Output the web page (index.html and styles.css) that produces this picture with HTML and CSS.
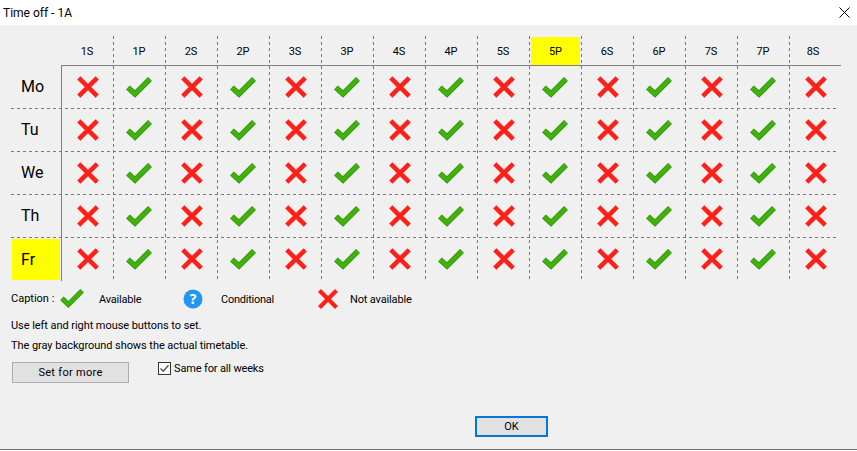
FILE: index.html
```html
<!DOCTYPE html>
<html lang="en">
<head>
<meta charset="utf-8">
<title>Time off - 1A</title>
<link rel="stylesheet" href="styles.css">
</head>
<body>
<svg class="defs" width="0" height="0" aria-hidden="true">
  <symbol id="no" viewBox="0 0 24 24"><path d="M3.5 3.5 L20.5 20.5 M20.5 3.5 L3.5 20.5" class="no-s"/></symbol>
  <symbol id="yes" viewBox="0 0 28 24"><path d="M3 12.5 L10 19 L25 4" class="yes-o"/><path d="M3 12.5 L10 19 L25 4" class="yes-s"/></symbol>
</svg>
<div class="page">
  <header class="titlebar">
    <span class="title">Time off - 1A</span>
    <svg class="close" viewBox="0 0 11 11" width="11" height="11"><path d="M.5 .5 L10.5 10.5 M10.5 .5 L.5 10.5"/></svg>
  </header>
  <main class="content">
    <div class="table">
      <svg class="lines" width="830" height="246" viewBox="0 0 830 246" aria-hidden="true">
        <path class="dash" d="M102.5 0V243M154.5 0V243M206.5 0V243M258.5 0V243M310.5 0V243M362.5 0V243M414.5 0V243M466.5 0V243M518.5 0V243M570.5 0V243M622.5 0V243M674.5 0V243M726.5 0V243M778.5 0V243"/>
        <path class="dash" d="M0 72.5H827M0 115.5H827M0 158.5H827M0 201.5H827"/>
        <path class="solid" d="M50.5 29V245M50 29.5H830"/>
      </svg>
      <div class="corner"></div>
      <div class="colhead">1S</div><div class="colhead">1P</div><div class="colhead">2S</div><div class="colhead">2P</div><div class="colhead">3S</div><div class="colhead">3P</div><div class="colhead">4S</div><div class="colhead">4P</div><div class="colhead">5S</div><div class="colhead mark">5P</div><div class="colhead">6S</div><div class="colhead">6P</div><div class="colhead">7S</div><div class="colhead">7P</div><div class="colhead last">8S</div>

      <div class="rowhead">Mo</div>
      <div class="cell"><svg class="no"><use href="#no"/></svg></div><div class="cell"><svg class="yes"><use href="#yes"/></svg></div><div class="cell"><svg class="no"><use href="#no"/></svg></div><div class="cell"><svg class="yes"><use href="#yes"/></svg></div><div class="cell"><svg class="no"><use href="#no"/></svg></div><div class="cell"><svg class="yes"><use href="#yes"/></svg></div><div class="cell"><svg class="no"><use href="#no"/></svg></div><div class="cell"><svg class="yes"><use href="#yes"/></svg></div><div class="cell"><svg class="no"><use href="#no"/></svg></div><div class="cell"><svg class="yes"><use href="#yes"/></svg></div><div class="cell"><svg class="no"><use href="#no"/></svg></div><div class="cell"><svg class="yes"><use href="#yes"/></svg></div><div class="cell"><svg class="no"><use href="#no"/></svg></div><div class="cell"><svg class="yes"><use href="#yes"/></svg></div><div class="cell"><svg class="no"><use href="#no"/></svg></div>

      <div class="rowhead">Tu</div>
      <div class="cell"><svg class="no"><use href="#no"/></svg></div><div class="cell"><svg class="yes"><use href="#yes"/></svg></div><div class="cell"><svg class="no"><use href="#no"/></svg></div><div class="cell"><svg class="yes"><use href="#yes"/></svg></div><div class="cell"><svg class="no"><use href="#no"/></svg></div><div class="cell"><svg class="yes"><use href="#yes"/></svg></div><div class="cell"><svg class="no"><use href="#no"/></svg></div><div class="cell"><svg class="yes"><use href="#yes"/></svg></div><div class="cell"><svg class="no"><use href="#no"/></svg></div><div class="cell"><svg class="yes"><use href="#yes"/></svg></div><div class="cell"><svg class="no"><use href="#no"/></svg></div><div class="cell"><svg class="yes"><use href="#yes"/></svg></div><div class="cell"><svg class="no"><use href="#no"/></svg></div><div class="cell"><svg class="yes"><use href="#yes"/></svg></div><div class="cell"><svg class="no"><use href="#no"/></svg></div>

      <div class="rowhead">We</div>
      <div class="cell"><svg class="no"><use href="#no"/></svg></div><div class="cell"><svg class="yes"><use href="#yes"/></svg></div><div class="cell"><svg class="no"><use href="#no"/></svg></div><div class="cell"><svg class="yes"><use href="#yes"/></svg></div><div class="cell"><svg class="no"><use href="#no"/></svg></div><div class="cell"><svg class="yes"><use href="#yes"/></svg></div><div class="cell"><svg class="no"><use href="#no"/></svg></div><div class="cell"><svg class="yes"><use href="#yes"/></svg></div><div class="cell"><svg class="no"><use href="#no"/></svg></div><div class="cell"><svg class="yes"><use href="#yes"/></svg></div><div class="cell"><svg class="no"><use href="#no"/></svg></div><div class="cell"><svg class="yes"><use href="#yes"/></svg></div><div class="cell"><svg class="no"><use href="#no"/></svg></div><div class="cell"><svg class="yes"><use href="#yes"/></svg></div><div class="cell"><svg class="no"><use href="#no"/></svg></div>

      <div class="rowhead">Th</div>
      <div class="cell"><svg class="no"><use href="#no"/></svg></div><div class="cell"><svg class="yes"><use href="#yes"/></svg></div><div class="cell"><svg class="no"><use href="#no"/></svg></div><div class="cell"><svg class="yes"><use href="#yes"/></svg></div><div class="cell"><svg class="no"><use href="#no"/></svg></div><div class="cell"><svg class="yes"><use href="#yes"/></svg></div><div class="cell"><svg class="no"><use href="#no"/></svg></div><div class="cell"><svg class="yes"><use href="#yes"/></svg></div><div class="cell"><svg class="no"><use href="#no"/></svg></div><div class="cell"><svg class="yes"><use href="#yes"/></svg></div><div class="cell"><svg class="no"><use href="#no"/></svg></div><div class="cell"><svg class="yes"><use href="#yes"/></svg></div><div class="cell"><svg class="no"><use href="#no"/></svg></div><div class="cell"><svg class="yes"><use href="#yes"/></svg></div><div class="cell"><svg class="no"><use href="#no"/></svg></div>

      <div class="rowhead mark">Fr</div>
      <div class="cell"><svg class="no"><use href="#no"/></svg></div><div class="cell"><svg class="yes"><use href="#yes"/></svg></div><div class="cell"><svg class="no"><use href="#no"/></svg></div><div class="cell"><svg class="yes"><use href="#yes"/></svg></div><div class="cell"><svg class="no"><use href="#no"/></svg></div><div class="cell"><svg class="yes"><use href="#yes"/></svg></div><div class="cell"><svg class="no"><use href="#no"/></svg></div><div class="cell"><svg class="yes"><use href="#yes"/></svg></div><div class="cell"><svg class="no"><use href="#no"/></svg></div><div class="cell"><svg class="yes"><use href="#yes"/></svg></div><div class="cell"><svg class="no"><use href="#no"/></svg></div><div class="cell"><svg class="yes"><use href="#yes"/></svg></div><div class="cell"><svg class="no"><use href="#no"/></svg></div><div class="cell"><svg class="yes"><use href="#yes"/></svg></div><div class="cell"><svg class="no"><use href="#no"/></svg></div>
    </div>

    <div class="legend">
      <span class="legend-title">Caption :</span>
      <svg class="yes legend-yes"><use href="#yes"/></svg>
      <span class="legend-available">Available</span>
      <svg class="help" viewBox="0 0 20 20" width="20" height="20"><circle cx="10" cy="10" r="9.5" class="help-bg"/><text x="10" y="15" class="help-mark">?</text></svg>
      <span class="legend-conditional">Conditional</span>
      <svg class="no legend-no"><use href="#no"/></svg>
      <span class="legend-not">Not available</span>
    </div>

    <p class="hint first">Use left and right mouse buttons to set.</p>
    <p class="hint">The gray background shows the actual timetable.</p>

    <div class="actions">
      <button class="btn more" type="button">Set for more</button>
      <label class="check">
        <svg class="box" viewBox="0 0 13 13" width="13" height="13"><rect x=".5" y=".5" width="12" height="12" class="box-r"/><path d="M2.5 6.5 L5.2 9.3 L10.5 3.2" class="box-c"/></svg>
        <span>Same for all weeks</span>
      </label>
    </div>

    <div class="confirm"><button class="btn ok" type="button">OK</button></div>
  </main>
  <div class="edge"></div>
</div>
</body>
</html>
```

FILE: styles.css
```css
* { box-sizing: border-box; }
html, body { margin: 0; padding: 0; }
body {
  font-family: Roboto, "Noto Sans", "Liberation Sans", sans-serif;
  font-size: 11px;
  color: #000;
  background: #f0f0f0;
}
.defs { position: absolute; }
.page {
  height: 451px;
  display: flex;
  flex-direction: column;
  overflow: hidden;
}
.titlebar {
  height: 25px;
  background: #fff;
  display: flex;
  align-items: center;
  justify-content: space-between;
  padding: 0 7px 0 3px;
  flex: none;
}
.title { font-size: 12px; }
.close { fill: none; stroke: #000; stroke-width: 1; }
.content { flex: 1; padding: 11px 0 0 11px; }

.table {
  position: relative;
  display: grid;
  grid-template-columns: 50px repeat(15, 52px);
  grid-template-rows: 29px repeat(5, 43px);
  width: 830px;
}
.lines { position: absolute; left: 0; top: 0; z-index: 1; pointer-events: none; }
.dash { fill: none; stroke: #777; stroke-width: 1; stroke-dasharray: 3 3; }
.solid { fill: none; stroke: #7f7f7f; stroke-width: 1; }
.colhead {
  display: flex;
  align-items: center;
  justify-content: center;
  font-size: 11px;
  padding-top: 1px;
}
.colhead.mark { background: #ff0; margin: 1px 1px 0 2px; }
.colhead.last { padding-right: 4px; }
.rowhead {
  display: flex;
  align-items: center;
  font-size: 16px;
  padding: 0 0 1px 10px;
}
.rowhead.mark { background: #ff0; margin: 2px 1px 0 1px; padding-left: 9px; }
.cell { display: flex; align-items: center; justify-content: center; }

svg.no { width: 26px; height: 26px; display: block; margin-left: 1px; }
svg.yes { width: 28px; height: 24px; display: block; }
.no-s { fill: none; stroke: #ff2119; stroke-width: 4.2; }
.yes-o { fill: none; stroke: #2b8f07; stroke-width: 5.5; }
.yes-s { fill: none; stroke: #3fb20c; stroke-width: 4; }

.legend {
  display: flex;
  align-items: center;
  height: 20px;
  margin-top: 9px;
}
.legend-title { width: 48px; flex: none; margin-top: -2px; }
svg.legend-yes { width: 26px; height: 22px; margin: -2px 0 0 0; flex: none; }
.legend-available { margin-left: 14px; width: 84px; flex: none; letter-spacing: -0.2px; }
.help { flex: none; }
.help-bg { fill: #2196f3; }
.help-mark { fill: #fff; font: 700 14px "Noto Sans", sans-serif; text-anchor: middle; }
.legend-conditional { margin-left: 18px; width: 95px; flex: none; letter-spacing: -0.25px; }
svg.legend-no { width: 24px; height: 24px; flex: none; margin: 0 10px 0 0; }
.legend-not { letter-spacing: -0.15px; }

.hint { margin: 0; height: 20px; line-height: 20px; letter-spacing: -0.06px; }
.hint.first { margin-top: 7px; }

.actions { display: flex; align-items: flex-start; margin-top: 6px; }
.btn {
  font: inherit;
  color: #000;
  background: #e1e1e1;
  border: 1px solid #adadad;
  border-radius: 0;
  padding: 0;
  height: 21px;
}
.more { width: 117px; margin-left: 1px; letter-spacing: 0.3px; }
.check { display: flex; align-items: center; gap: 3px; margin-left: 29px; height: 13px; letter-spacing: -0.15px; }
.box { flex: none; }
.box-r { fill: #fff; stroke: #333; }
.box-c { fill: none; stroke: #555; stroke-width: 1.4; }

.confirm { margin: 33px 0 0 464px; }
.ok { width: 73px; border: 2px solid #0078d7; }

.edge {
  height: 2px;
  flex: none;
  border-top: 1px solid #6e6e6e;
  background: #fff;
}
```
